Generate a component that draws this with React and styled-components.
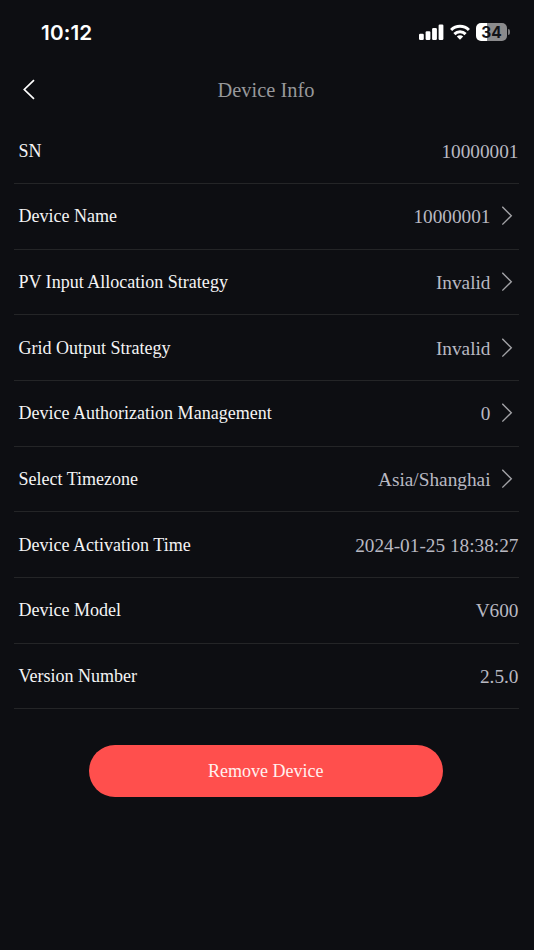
import styled, { createGlobalStyle } from "styled-components";

const GlobalStyle = createGlobalStyle`
    body {
        margin: 0;
        background: #0d0e12;
    }
    * {
        box-sizing: border-box;
    }
`

const Page = styled.div`
    min-height: 950px;
    background: #0d0e12;
    font-family: "Liberation Serif", "Times New Roman", serif;
`

const StatusBar = styled.div`
    display: flex;
    align-items: center;
    justify-content: space-between;
    height: 64px;
    padding: 0 24px 0 41px;
`

const Clock = styled.span`
    padding-top: 1px;
    font-family: Inter, sans-serif;
    font-size: 20.7px;
    font-weight: 600;
    letter-spacing: 0.15px;
    color: #fff;
`

const StatusIcons = styled.div`
    display: flex;
    align-items: center;
    gap: 6px;

    svg {
        display: block;
    }
`

const BatteryWrap = styled.div`
    display: flex;
    align-items: center;
    gap: 1px;
`

const Battery = styled.div`
    display: flex;
    align-items: center;
    justify-content: center;
    width: 31px;
    height: 18px;
    border-radius: 5px;
    background: linear-gradient(to right, #fff 34%, #8b8b8d 34%);
    font-family: Inter, sans-serif;
    font-size: 15.5px;
    font-weight: 700;
    color: #111216;
`

const BatteryTip = styled.div`
    width: 2px;
    height: 6px;
    border-radius: 0 2px 2px 0;
    background: #77777a;
`

const NavBar = styled.header`
    display: grid;
    grid-template-columns: 40px 1fr 40px;
    align-items: center;
    height: 54px;
    padding: 0 2px 2px 0;
`

const BackButton = styled.button`
    display: flex;
    padding: 0 0 1px 22px;
    border: 0;
    background: none;
`

const Title = styled.h1`
    margin: 0;
    font-size: 20.4px;
    font-weight: 400;
    line-height: 24px;
    text-align: center;
    color: #97989b;
`

const List = styled.ul`
    margin: 0;
    padding: 0.25px 15.5px 0 14px;
    list-style: none;
`

const Row = styled.li`
    display: flex;
    align-items: center;
    justify-content: space-between;
    height: 65.7px;
    padding-left: 4.4px;
    border-bottom: 1px solid #242527;
`

const Label = styled.span`
    font-size: 18.05px;
    line-height: 20px;
    color: #f4f4f5;
`

const Value = styled.span`
    display: flex;
    align-items: center;
    gap: 11px;
    padding-right: ${({ $link }) => ($link ? "6px" : "0")};
    font-size: 19.3px;
    line-height: 22px;
    color: #b9b9c2;
`

const ValueText = styled.span`
    padding-top: 2px;
`

const RemoveButton = styled.button`
    display: block;
    width: 354.5px;
    height: 52px;
    margin: 35.6px 0 0 88.5px;
    padding: 0;
    border: 0;
    border-radius: 26px;
    background: #ff4f4d;
    font-family: inherit;
    font-size: 18px;
    color: #fff1f0;
`

const rows = [
    { label: "SN", value: "10000001" },
    { label: "Device Name", value: "10000001", link: true },
    { label: "PV Input Allocation Strategy", value: "Invalid", link: true },
    { label: "Grid Output Strategy", value: "Invalid", link: true },
    { label: "Device Authorization Management", value: "0", link: true },
    { label: "Select Timezone", value: "Asia/Shanghai", link: true },
    { label: "Device Activation Time", value: "2024-01-25 18:38:27" },
    { label: "Device Model", value: "V600" },
    { label: "Version Number", value: "2.5.0" },
];

const SignalIcon = () => (
    <svg width="25" height="16" viewBox="0 0 25 16" fill="#fff">
        <rect x="0" y="9.8" width="4.8" height="6.2" rx="1.2" />
        <rect x="6.6" y="7.2" width="4.8" height="8.8" rx="1.2" />
        <rect x="13.1" y="4" width="4.8" height="12" rx="1.2" />
        <rect x="19.6" y="0.6" width="4.8" height="15.4" rx="1.2" />
    </svg>
)

const WifiIcon = () => (
    <svg width="20" height="16" viewBox="0 0 20 16" fill="none" stroke="#fff" strokeWidth="3">
        <path d="M1.1 6a12.6 12.6 0 0 1 17.8 0" />
        <path d="M4.4 10.1a7.9 7.9 0 0 1 11.2 0" />
        <path d="M10 15.8 6.8 12.6a4.6 4.6 0 0 1 6.4 0Z" fill="#fff" stroke="none" />
    </svg>
)

const BackIcon = () => (
    <svg width="14" height="21" viewBox="0 0 14 21" fill="none" stroke="#fff" strokeWidth="1.7">
        <path d="M12 1.2 2.3 10.5 12 19.8" />
    </svg>
)

const ArrowIcon = () => (
    <svg width="11" height="20" viewBox="0 0 11 20" fill="none" stroke="#a2a2a6" strokeWidth="1.4">
        <path d="M0.3 0.8 9.3 9.7 0.3 18.6" />
    </svg>
)

const App = () => {
    return (
        <Page>
            <GlobalStyle />
            <StatusBar>
                <Clock>10:12</Clock>
                <StatusIcons>
                    <SignalIcon />
                    <WifiIcon />
                    <BatteryWrap>
                        <Battery>34</Battery>
                        <BatteryTip />
                    </BatteryWrap>
                </StatusIcons>
            </StatusBar>
            <NavBar>
                <BackButton aria-label="Back">
                    <BackIcon />
                </BackButton>
                <Title>Device Info</Title>
            </NavBar>
            <List>
                {rows.map(({ label, value, link }) => (
                    <Row key={label}>
                        <Label>{label}</Label>
                        <Value $link={link}>
                            <ValueText>{value}</ValueText>
                            {link && <ArrowIcon />}
                        </Value>
                    </Row>
                ))}
            </List>
            <RemoveButton>Remove Device</RemoveButton>
        </Page>
    )
}

export default App;
